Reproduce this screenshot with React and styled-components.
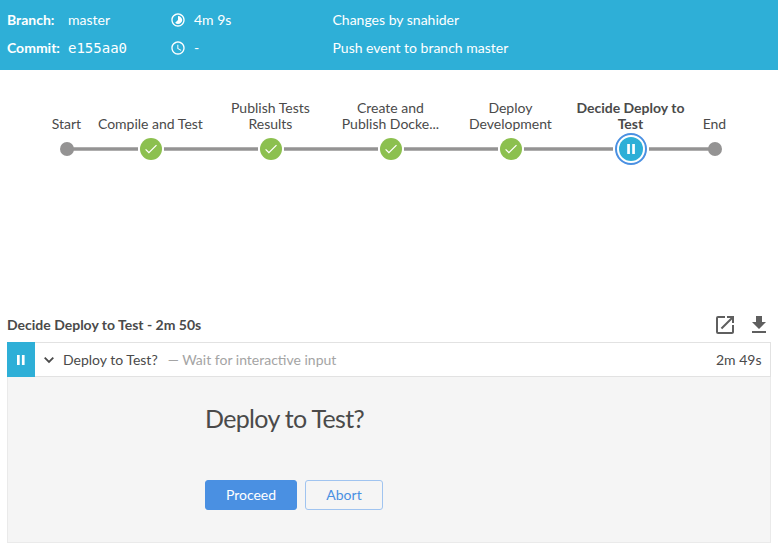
import React from "react";
import styled, { createGlobalStyle, css } from "styled-components";

const GlobalStyle = createGlobalStyle`
  *, *::before, *::after { box-sizing: border-box; }
  body {
    margin: 0;
    background: #fff;
    color: #4a4a4a;
    font: 14px/20px Lato, "Open Sans", sans-serif;
  }
`;

const Page = styled.div`
  height: 551px;
  overflow: hidden;
  display: flex;
  flex-direction: column;
`;

const Header = styled.header`
  height: 70px;
  flex: none;
  padding: 6px 7px;
  display: grid;
  grid-template-columns: 61px 102px 24px 138.5px 1fr;
  grid-template-rows: 28px 28px;
  align-items: center;
  background: #2eafd7;
  color: #fff;
  white-space: nowrap;

  svg { display: block; }
`;

const Label = styled.span`
  font-weight: 700;
`;

const Value = styled.span`
  font-weight: 400;
`;

const Hash = styled.span`
  font-family: "DejaVu Sans Mono", monospace;
  font-size: 14px;
`;

const Graph = styled.section`
  height: 241px;
  flex: none;
  padding: 28px 0 0 43px;
`;

const StageLabels = styled.div`
  height: 35px;
  padding-bottom: 1px;
  margin-left: -0.6px;
  display: grid;
  grid-template-columns: 48px repeat(5, 120px) 48px;
  align-items: end;
`;

const StageLabel = styled.div`
  text-align: center;
  line-height: 16px;
  white-space: pre;
  ${(p) => p.$active && css`font-weight: 700;`}
`;

const Track = styled.svg`
  display: block;
`;

const StepsHeader = styled.div`
  height: 31px;
  flex: none;
  padding: 0 7px 3px 7px;
  display: flex;
  align-items: center;
  justify-content: space-between;
`;

const Title = styled.h2`
  margin: 0;
  font-size: 14px;
  font-weight: 700;
`;

const Tools = styled.div`
  display: flex;
  gap: 10px;

  svg { display: block; }
`;

const Step = styled.div`
  margin: 0 7px;
  height: 35px;
  flex: none;
  display: flex;
  align-items: center;
  border: 1px solid #e2e2e2;
  border-left: 0;
  white-space: nowrap;
`;

const StepStatus = styled.div`
  width: 28px;
  height: 35px;
  margin: -1px 0;
  flex: none;
  display: flex;
  align-items: center;
  justify-content: center;
  background: #2eafd7;
`;

const Chevron = styled.svg`
  margin: 0 9px;
  display: block;
`;

const Hint = styled.span`
  margin-left: 10px;
  color: #a4a4a4;
`;

const Duration = styled.span`
  margin-left: auto;
  padding-right: 8.5px;
`;

const InputPanel = styled.div`
  margin: 0 7px;
  height: 166px;
  flex: none;
  padding: 26px 0 0 197px;
  background: #f5f5f5;
  border: 1px solid #eaeaea;
  border-top: 0;
`;

const Question = styled.h1`
  margin: 0;
  font-size: 25px;
  line-height: 30px;
  font-weight: 400;
  letter-spacing: -0.67px;
`;

const Actions = styled.div`
  margin-top: 47px;
  display: flex;
  gap: 8px;
`;

const Button = styled.button`
  width: ${(p) => p.$width};
  height: 30px;
  padding: 0;
  border: 1px solid ${(p) => (p.$primary ? "#4a90e2" : "#a0c4f0")};
  border-radius: 3px;
  background: ${(p) => (p.$primary ? "#4a90e2" : "transparent")};
  color: ${(p) => (p.$primary ? "#fff" : "#4a90e2")};
  font: inherit;
`;

const stages = [
  { name: "Start" },
  { name: "Compile and Test" },
  { name: "Publish Tests\nResults" },
  { name: "Create and\nPublish Docke..." },
  { name: "Deploy\nDevelopment" },
  { name: "Decide Deploy to\nTest", active: true },
  { name: "End" },
];

const connectors = [
  [24, 95],
  [121, 215],
  [241, 335],
  [361, 455],
  [481, 570],
  [606, 672],
];

const PipelineTrack = () => (
  <Track width="696" height="34" viewBox="0 0 696 34">
    {connectors.map(([from, to]) => (
      <line key={from} x1={from} x2={to} y1="16" y2="16" stroke="#949393" strokeWidth="3.5" />
    ))}
    <circle cx="24" cy="16" r="7" fill="#949393" />
    <circle cx="672" cy="16" r="7" fill="#949393" />
    {[108, 228, 348, 468].map((x) => (
      <g key={x}>
        <circle cx={x} cy="16" r="11" fill="#8cc04f" />
        <path d={`M${x - 5.4} 16.4l3.3 3.3 7.6-7.6`} fill="none" stroke="#fff" strokeWidth="1.3" />
      </g>
    ))}
    <circle cx="588" cy="16" r="15" fill="#fff" stroke="#4a90e2" strokeWidth="2" />
    <circle cx="588" cy="16" r="12" fill="#2eafd7" />
    <path d="M584.2 11h2.7v10h-2.7zM589.2 11h2.7v10h-2.7z" fill="#fff" />
  </Track>
);

export default function App() {
  return (
    <>
      <GlobalStyle />
      <Page>
        <Header>
          <Label>Branch:</Label>
          <Value>master</Value>
          <svg width="16" height="16" viewBox="0 0 24 24" fill="#fff">
            <path d="M16.24 7.76A5.974 5.974 0 0 0 12 6v6l-4.24 4.24c2.34 2.34 6.14 2.34 8.49 0a5.99 5.99 0 0 0-.01-8.48zM12 2C6.48 2 2 6.48 2 12s4.48 10 10 10 10-4.48 10-10S17.52 2 12 2zm0 18c-4.42 0-8-3.58-8-8s3.58-8 8-8 8 3.58 8 8-3.58 8-8 8z" />
          </svg>
          <Value>4m 9s</Value>
          <Value>Changes by snahider</Value>
          <Label>Commit:</Label>
          <Hash>e155aa0</Hash>
          <svg width="16" height="16" viewBox="0 0 24 24" fill="#fff">
            <path d="M11.99 2C6.47 2 2 6.48 2 12s4.47 10 9.99 10C17.52 22 22 17.52 22 12S17.52 2 11.99 2zM12 20c-4.42 0-8-3.58-8-8s3.58-8 8-8 8 3.58 8 8-3.58 8-8 8zM12.5 7H11v6l5.25 3.15.75-1.23-4.5-2.67z" />
          </svg>
          <Value>-</Value>
          <Value>Push event to branch master</Value>
        </Header>
        <Graph>
          <StageLabels>
            {stages.map((s) => (
              <StageLabel key={s.name} $active={s.active}>{s.name}</StageLabel>
            ))}
          </StageLabels>
          <PipelineTrack />
        </Graph>
        <StepsHeader>
          <Title>Decide Deploy to Test - 2m 50s</Title>
          <Tools>
            <svg width="24" height="24" viewBox="0 0 24 24" fill="#5f5f5f">
              <path d="M19 19H5V5h7V3H5a2 2 0 0 0-2 2v14a2 2 0 0 0 2 2h14c1.1 0 2-.9 2-2v-7h-2v7zM14 3v2h3.59l-9.83 9.83 1.41 1.41L19 6.41V10h2V3h-7z" />
            </svg>
            <svg width="24" height="24" viewBox="0 0 24 24" fill="#5f5f5f">
              <path d="M19 9h-4V3H9v6H5l7 7 7-7zM5 18v2h14v-2H5z" />
            </svg>
          </Tools>
        </StepsHeader>
        <Step>
          <StepStatus>
            <svg width="10" height="10" viewBox="0 0 10 10" fill="#fff">
              <path d="M1 0h2.7v10H1zM5.9 0h2.7v10H5.9z" />
            </svg>
          </StepStatus>
          <Chevron width="10" height="8" viewBox="0 0 10 8" fill="none" stroke="#4a4a4a" strokeWidth="1.8">
            <path d="M.7 1.6L5 5.9l4.3-4.3" />
          </Chevron>
          <span>Deploy to Test?</span>
          <Hint>— Wait for interactive input</Hint>
          <Duration>2m 49s</Duration>
        </Step>
        <InputPanel>
          <Question>Deploy to Test?</Question>
          <Actions>
            <Button $primary $width="92px">Proceed</Button>
            <Button $width="78px">Abort</Button>
          </Actions>
        </InputPanel>
      </Page>
    </>
  );
}
